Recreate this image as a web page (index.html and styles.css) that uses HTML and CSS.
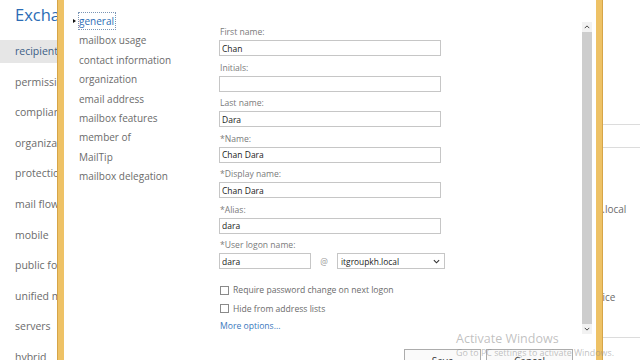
FILE: index.html
```html
<!DOCTYPE html>
<html lang="en">
<head>
    <meta charset="UTF-8">
    <meta name="viewport" content="width=device-width, initial-scale=1.0">
    <title>Exchange admin center - Edit user mailbox</title>
    <link rel="stylesheet" href="styles.css">
</head>
<body>
    <div class="eac">
        <aside class="eac-nav">
            <div class="eac-title">Exchange admin center</div>
            <ul class="eac-menu">
                <li class="active">recipients</li>
                <li>permissions</li>
                <li>compliance management</li>
                <li>organization</li>
                <li>protection</li>
                <li>mail flow</li>
                <li>mobile</li>
                <li>public folders</li>
                <li>unified messaging</li>
                <li>servers</li>
                <li>hybrid</li>
            </ul>
        </aside>
        <main class="eac-main">
            <div class="eac-row"></div>
            <div class="eac-text first">itgroupkh.local</div>
            <div class="eac-text second">Office</div>
            <div class="eac-rule"></div>
        </main>
    </div>

    <div class="dialog">
        <div class="dialog-body">
            <ul class="dialog-nav">
                <li class="current"><span>general</span></li>
                <li><span>mailbox usage</span></li>
                <li><span>contact information</span></li>
                <li><span>organization</span></li>
                <li><span>email address</span></li>
                <li><span>mailbox features</span></li>
                <li><span>member of</span></li>
                <li><span>MailTip</span></li>
                <li><span>mailbox delegation</span></li>
            </ul>

            <div class="panel">
                <form class="form">
                    <div class="field">
                        <label>First name:</label>
                        <input type="text" value="Chan">
                    </div>
                    <div class="field">
                        <label>Initials:</label>
                        <input type="text" value="">
                    </div>
                    <div class="field">
                        <label>Last name:</label>
                        <input type="text" value="Dara">
                    </div>
                    <div class="field">
                        <label>*Name:</label>
                        <input type="text" value="Chan Dara">
                    </div>
                    <div class="field">
                        <label>*Display name:</label>
                        <input type="text" value="Chan Dara">
                    </div>
                    <div class="field">
                        <label>*Alias:</label>
                        <input type="text" value="dara">
                    </div>
                    <div class="field">
                        <label>*User logon name:</label>
                        <div class="logon">
                            <input type="text" class="short" value="dara">
                            <span class="at">@</span>
                            <div class="select">
                                <span>itgroupkh.local</span>
                                <svg viewBox="0 0 8 5" width="7" height="5"><polyline points="1,1 4,4 7,1" fill="none" stroke="#333" stroke-width="1.3"/></svg>
                            </div>
                        </div>
                    </div>

                    <div class="checks">
                        <div class="check"><span class="box"></span>Require password change on next logon</div>
                        <div class="check"><span class="box"></span>Hide from address lists</div>
                        <a class="more">More options...</a>
                    </div>
                </form>

                <div class="scrollbar">
                    <div class="arrow">
                        <svg viewBox="0 0 8 5" width="6" height="4"><polyline points="1,4 4,1 7,4" fill="none" stroke="#444" stroke-width="1.3"/></svg>
                    </div>
                    <div class="thumb"></div>
                    <div class="arrow">
                        <svg viewBox="0 0 8 5" width="6" height="4"><polyline points="1,1 4,4 7,1" fill="none" stroke="#444" stroke-width="1.3"/></svg>
                    </div>
                </div>
            </div>
        </div>

        <div class="dialog-footer">
            <button class="btn save">Save</button>
            <button class="btn cancel">Cancel</button>
        </div>
    </div>

    <div class="watermark">
        <div class="wm-title">Activate Windows</div>
        <div class="wm-text">Go to PC settings to activate Windows.</div>
    </div>
</body>
</html>
```

FILE: styles.css
```css
:root {
    --blue: #2b6cb5;
    --text-gray: #6b6b6b;
    --label-gray: #7a7a7a;
    --input-border: #c6c6c6;
    --gold: #eec266;
    --gold-edge: #d6a548;
}

* {
    margin: 0;
    padding: 0;
    box-sizing: border-box;
}

body {
    width: 640px;
    height: 360px;
    overflow: hidden;
    position: relative;
    background: #fff;
    font-family: 'Open Sans', 'Noto Sans', Arial, sans-serif;
    color: #333;
}

ul {
    list-style: none;
}

/* background admin page */
.eac {
    display: flex;
    height: 360px;
}

.eac-nav {
    width: 58px;
    overflow: hidden;
    white-space: nowrap;
}

.eac-title {
    padding: 4px 0 0 15px;
    height: 40px;
    line-height: 22px;
    font-size: 16.5px;
    color: var(--blue);
}

.eac-menu li {
    height: 23px;
    line-height: 23px;
    margin-bottom: 7.6px;
    padding-left: 15px;
    font-size: 10.5px;
    color: var(--text-gray);
}

.eac-menu li.active {
    background: #e6e6e6;
    color: #3d5f86;
}

.eac-main {
    flex: 1;
    padding-left: 544px;
    white-space: nowrap;
    overflow: hidden;
    font-size: 10px;
    color: var(--text-gray);
}

.eac-row {
    margin-top: 124px;
    height: 24px;
    border-top: 1px solid #dcdcdc;
    border-bottom: 1px solid #dcdcdc;
}

.eac-text {
    line-height: 14px;
}

.eac-text.first {
    margin-top: 54px;
    text-indent: -45px;
}

.eac-text.second {
    margin-top: 74px;
    text-indent: -14px;
}

.eac-rule {
    margin-top: 33px;
    border-top: 1px solid #dcdcdc;
}

/* modal dialog */
.dialog {
    position: absolute;
    left: 58px;
    top: 0;
    width: 544px;
    height: 360px;
    background: #fff;
    border-left: 6px solid var(--gold);
    border-right: 6px solid var(--gold);
    box-shadow: -1px 0 0 var(--gold-edge), 1px 0 0 var(--gold-edge);
    display: flex;
    flex-direction: column;
}

.dialog-body {
    display: flex;
    height: 334px;
}

.dialog-nav {
    width: 155px;
    padding: 12px 0 0 15px;
    font-size: 10px;
    color: var(--text-gray);
}

.dialog-nav li {
    height: 19.4px;
    line-height: 19.4px;
    position: relative;
}

.dialog-nav li span {
    padding: 1px 1px 1px 0;
}

.dialog-nav li.current span {
    color: var(--blue);
    outline: 1px dotted #7a95b5;
}

.dialog-nav li.current::before {
    content: "";
    position: absolute;
    left: -6px;
    top: 7px;
    border-left: 3px solid #111;
    border-top: 2.5px solid transparent;
    border-bottom: 2.5px solid transparent;
}

.panel {
    flex: 1;
    display: flex;
    margin-top: 22px;
    height: 312px;
}

.form {
    flex: 1;
    padding-top: 3px;
}

.field {
    margin-bottom: 4.5px;
}

.field label {
    display: block;
    height: 14px;
    line-height: 14px;
    margin-bottom: 1px;
    padding-left: 1px;
    font-size: 8.6px;
    color: var(--label-gray);
}

.field input {
    display: block;
    width: 222px;
    height: 16px;
    border: 1px solid var(--input-border);
    padding: 0 2px;
    font-family: inherit;
    font-size: 8.5px;
    color: #222;
    outline: none;
}

.logon {
    display: flex;
    align-items: center;
}

.field input.short {
    width: 92px;
}

.at {
    width: 26px;
    text-align: center;
    font-size: 8.5px;
    color: #9a9a9a;
}

.select {
    width: 108px;
    height: 16px;
    border: 1px solid var(--input-border);
    display: flex;
    align-items: center;
    justify-content: space-between;
    padding: 0 4px 0 3px;
    font-size: 8.4px;
    color: #222;
}

.checks {
    margin-top: 12px;
    font-size: 8.6px;
    color: var(--text-gray);
}

.check {
    display: flex;
    align-items: center;
    height: 18.5px;
    padding-left: 1px;
}

.box {
    width: 9px;
    height: 9px;
    border: 1px solid #8a8a8a;
    margin-right: 4px;
}

.more {
    display: block;
    height: 17px;
    line-height: 17px;
    padding-left: 1px;
    color: #3a78bd;
}

.scrollbar {
    width: 10px;
    margin-right: 4px;
    display: flex;
    flex-direction: column;
}

.arrow {
    height: 10px;
    background: #f2f2f2;
    display: flex;
    align-items: center;
    justify-content: center;
}

.thumb {
    flex: 1;
    background: #cdcdcd;
}

.dialog-footer {
    display: flex;
    justify-content: flex-end;
    gap: 5px;
    padding: 15px 23px 0 0;
}

.btn {
    height: 24px;
    border: 1px solid #acacac;
    background: #fafafa;
    font-family: inherit;
    font-size: 10px;
    color: #333;
}

.btn.save {
    width: 77px;
}

.btn.cancel {
    width: 87px;
}

/* activation watermark */
.watermark {
    position: absolute;
    left: 456px;
    top: 330px;
    color: rgba(140, 140, 140, 0.55);
    pointer-events: none;
    white-space: nowrap;
}

.wm-title {
    font-size: 12.5px;
    line-height: 17px;
}

.wm-text {
    font-size: 8.9px;
    line-height: 12px;
}
```
